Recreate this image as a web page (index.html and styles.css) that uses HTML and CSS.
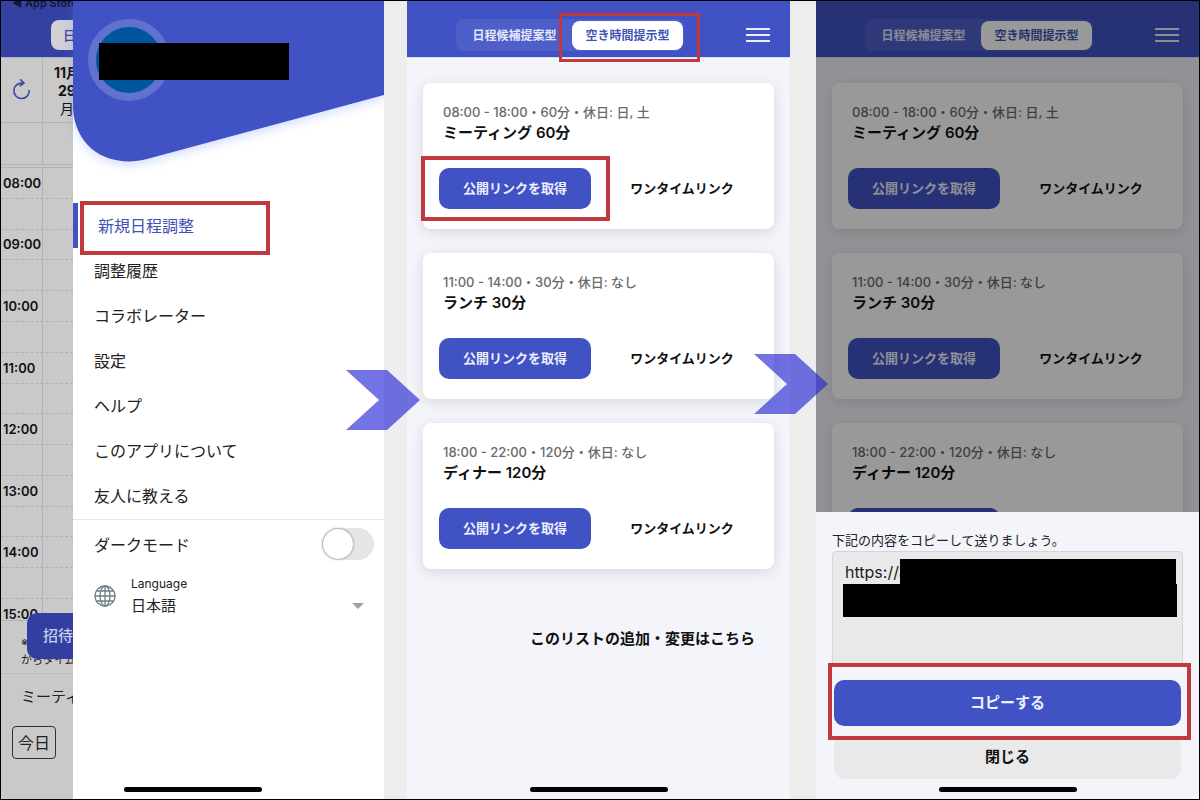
FILE: index.html
```
<!DOCTYPE html>
<html lang="ja">
<head>
<meta charset="UTF-8">
<meta name="viewport" content="width=device-width, initial-scale=1.0">
<title>公開リンクの取得手順</title>
<link rel="stylesheet" href="styles.css">
</head>
<body>
<div class="steps">

    <!-- 1. メニュー -->
    <section class="phone phone-menu">
        <div class="calendar">
            <div class="status">◀ App Store</div>
            <header class="cal-bar"><button type="button" class="cal-tab">日程候補提案型</button></header>
            <div class="cal-head">
                <button type="button" class="reload" aria-label="更新">
                    <svg viewBox="0 0 20 22" width="20" height="22" fill="none" stroke="#3c479f" stroke-width="1.6">
                        <path d="M17.2 12A7.7 7.7 0 1 1 10.5 5.2M8.2 1.2l3.8 4-4.4 3"/>
                    </svg>
                </button>
                <div class="cal-day"><b>11月</b><b>29</b><span>月</span></div>
            </div>
            <div class="cal-allday"><span></span></div>
            <div class="cal-hours">
                <div>08:00</div><div></div>
                <div>09:00</div><div></div>
                <div>10:00</div><div></div>
                <div>11:00</div><div></div>
                <div>12:00</div><div></div>
                <div>13:00</div><div></div>
                <div>14:00</div><div></div>
            </div>
            <div class="cal-last">15:00</div>
            <div class="cal-note">
                <p>※長押し</p>
                <p>からタイムゾーン</p>
                <button type="button" class="invite">招待する</button>
            </div>
            <p class="cal-title">ミーティング</p>
            <button type="button" class="today">今日</button>
        </div>

        <div class="drawer">
            <div class="profile">
                <svg class="profile-bg" viewBox="0 0 311 170" preserveAspectRatio="none">
                    <path d="M0 0H311V94L74 158C40 167 3 151 0 108Z" fill="#4152c5"/>
                </svg>
                <span class="avatar"></span>
                <span class="redact redact-name"></span>
            </div>
            <nav class="menu">
                <a href="#" class="active">新規日程調整<span class="marker"></span></a>
                <a href="#">調整履歴</a>
                <a href="#">コラボレーター</a>
                <a href="#">設定</a>
                <a href="#">ヘルプ</a>
                <a href="#">このアプリについて</a>
                <a href="#">友人に教える</a>
            </nav>
            <div class="dark-row">
                <label for="dark">ダークモード</label>
                <input type="checkbox" id="dark" class="switch">
            </div>
            <div class="lang-row">
                <svg viewBox="0 0 22 22" width="22" height="22" fill="none" stroke="#6e7f89" stroke-width="1.3">
                    <circle cx="11" cy="11" r="10"/>
                    <ellipse cx="11" cy="11" rx="5" ry="10"/>
                    <path d="M11 1v20M1 11h20M2.500 6h17M2.500 16h17"/>
                </svg>
                <div class="lang-field">
                    <label for="lang">Language</label>
                    <select id="lang"><option>日本語</option></select>
                </div>
                <span class="caret"></span>
            </div>
        </div>
        <span class="home-bar"></span>
    </section>

    <div class="connector">
        <svg class="arrow" viewBox="0 0 74 60" width="74" height="60"><path d="M0 0H41L74 30 41 60H0L33 30Z"/></svg>
    </div>

    <!-- 2. 空き時間提示型 -->
    <section class="phone">
        <header class="bar">
            <div class="tabs">
                <button type="button">日程候補提案型</button>
                <button type="button" class="on">空き時間提示型</button>
                <span class="marker"></span>
            </div>
            <button type="button" class="burger" aria-label="メニュー"><i></i><i></i><i></i></button>
        </header>
        <main class="cards">
            <article class="card">
                <p class="meta">08:00 - 18:00・60分・休日: 日, 土</p>
                <h2>ミーティング 60分</h2>
                <div class="actions">
                    <div class="marked"><button type="button" class="primary">公開リンクを取得</button><span class="marker"></span></div>
                    <button type="button" class="plain">ワンタイムリンク</button>
                </div>
            </article>
            <article class="card">
                <p class="meta">11:00 - 14:00・30分・休日: なし</p>
                <h2>ランチ 30分</h2>
                <div class="actions">
                    <button type="button" class="primary">公開リンクを取得</button>
                    <button type="button" class="plain">ワンタイムリンク</button>
                </div>
            </article>
            <article class="card">
                <p class="meta">18:00 - 22:00・120分・休日: なし</p>
                <h2>ディナー 120分</h2>
                <div class="actions">
                    <button type="button" class="primary">公開リンクを取得</button>
                    <button type="button" class="plain">ワンタイムリンク</button>
                </div>
            </article>
        </main>
        <a href="#" class="edit-list">このリストの追加・変更はこちら</a>
        <span class="home-bar"></span>
    </section>

    <div class="connector connector-high">
        <svg class="arrow" viewBox="0 0 74 60" width="74" height="60"><path d="M0 0H41L74 30 41 60H0L33 30Z"/></svg>
    </div>

    <!-- 3. コピー -->
    <section class="phone">
        <header class="bar">
            <div class="tabs">
                <button type="button">日程候補提案型</button>
                <button type="button" class="on">空き時間提示型</button>
            </div>
            <button type="button" class="burger" aria-label="メニュー"><i></i><i></i><i></i></button>
        </header>
        <main class="cards">
            <article class="card">
                <p class="meta">08:00 - 18:00・60分・休日: 日, 土</p>
                <h2>ミーティング 60分</h2>
                <div class="actions">
                    <button type="button" class="primary">公開リンクを取得</button>
                    <button type="button" class="plain">ワンタイムリンク</button>
                </div>
            </article>
            <article class="card">
                <p class="meta">11:00 - 14:00・30分・休日: なし</p>
                <h2>ランチ 30分</h2>
                <div class="actions">
                    <button type="button" class="primary">公開リンクを取得</button>
                    <button type="button" class="plain">ワンタイムリンク</button>
                </div>
            </article>
            <article class="card">
                <p class="meta">18:00 - 22:00・120分・休日: なし</p>
                <h2>ディナー 120分</h2>
                <div class="actions">
                    <button type="button" class="primary">公開リンクを取得</button>
                    <button type="button" class="plain">ワンタイムリンク</button>
                </div>
            </article>
        </main>
        <div class="shade"></div>
        <div class="sheet">
            <label for="url">下記の内容をコピーして送りましょう。</label>
            <div class="url-box">
                <textarea id="url" readonly>https://a</textarea>
                <span class="redact redact-top"></span>
                <span class="redact redact-bottom"></span>
            </div>
            <div class="marked copy-wrap"><button type="button" class="copy">コピーする</button><span class="marker"></span></div>
            <button type="button" class="close">閉じる</button>
        </div>
        <span class="home-bar"></span>
    </section>

</div>
</body>
</html>
```
FILE: styles.css
```
* {
    box-sizing: border-box;
}
body {
    margin: 0;
    font-family: Inter, 'Noto Sans CJK JP', sans-serif;
    font-size: 16px;
    color: #222;
    background: #ededed;
}
p, h2 {
    margin: 0;
}
button {
    padding: 0;
    border: none;
    background: none;
    font-family: inherit;
    color: inherit;
    white-space: nowrap;
    cursor: pointer;
}
a {
    color: inherit;
    text-decoration: none;
}
.steps {
    display: grid;
    grid-template-columns: 1fr 23px 1fr 26px 1fr;
    min-height: 100vh;
    border: 1px solid #000;
}
.phone {
    position: relative;
    display: flex;
    flex-direction: column;
    min-width: 0;
    overflow: hidden;
    background: #f4f5fa;
}
.home-bar {
    position: absolute;
    bottom: 7px;
    left: 50%;
    width: 138px;
    height: 5px;
    margin-left: -69px;
    border-radius: 3px;
    background: #000;
}
.connector {
    position: relative;
    z-index: 2;
}
.arrow {
    position: absolute;
    top: 369px;
    left: -38px;
    fill: rgba(36, 36, 211, 0.64);
}
.connector-high .arrow {
    top: 353px;
    left: -36px;
}
.marked {
    position: relative;
}
.marker {
    position: absolute;
    border: 4px solid #c0393f;
    pointer-events: none;
}
.redact {
    position: absolute;
    background: #000;
}

/* calendar behind the drawer */
.phone-menu {
    flex-direction: row;
    background: #fff;
}
.calendar {
    position: relative;
    flex: 0 0 72px;
    overflow: hidden;
    white-space: nowrap;
    background: #c9c9c9;
}
.status {
    position: absolute;
    top: -6px;
    left: 11px;
    font-size: 11px;
    line-height: 16px;
    font-weight: 600;
    color: #11163d;
}
.cal-bar {
    height: 57px;
    padding: 19px 0 0 50px;
    border-bottom: 1px solid #a9b0d8;
    background: #3541a0;
}
.cal-tab {
    height: 30px;
    padding: 0 12px;
    border-radius: 8px;
    background: #cfcfd4;
    color: #3541a0;
    font-size: 13px;
    line-height: 28px;
    font-weight: 500;
}
.cal-head {
    display: flex;
    height: 65px;
    border-bottom: 1px solid #b3b3b3;
}
.reload {
    flex: 0 0 42px;
    border-right: 1px solid #b3b3b3;
}
.cal-day {
    display: flex;
    flex: 0 0 48px;
    flex-direction: column;
    align-items: center;
    padding-top: 6px;
    font-size: 14px;
    line-height: 18px;
    color: #111;
}
.cal-allday {
    height: 45px;
    padding-bottom: 2px;
    border-bottom: 1px solid #b3b3b3;
}
.cal-allday span {
    display: block;
    height: 42px;
    border-bottom: 1px solid #b3b3b3;
    background: linear-gradient(#b3b3b3, #b3b3b3) 41px 0 / 1px 100% no-repeat;
}
.cal-hours, .cal-last {
    background: linear-gradient(#b3b3b3, #b3b3b3) 41px 0 / 1px 100% no-repeat;
    font-size: 13px;
    font-weight: 600;
    color: #111;
}
.cal-hours {
    display: grid;
    grid-auto-rows: 1fr;
    height: 431px;
}
.cal-hours div {
    display: flex;
    align-items: center;
    padding-left: 2px;
    border-bottom: 1px dashed #b0b0b0;
}
.cal-last {
    height: 22px;
    padding-left: 2px;
    line-height: 30px;
    border-bottom: 1px solid #b3b3b3;
}
.cal-note {
    position: relative;
    height: 53px;
    padding: 12px 0 0 20px;
    border-bottom: 1px solid #b9bcc0;
    font-size: 11px;
    line-height: 18px;
}
.invite {
    position: absolute;
    top: -8px;
    left: 26px;
    height: 46px;
    padding: 0 16px;
    border-radius: 10px;
    background: #323fa0;
    color: #c9cdf0;
    font-size: 15px;
    line-height: 44px;
    font-weight: 500;
}
.cal-title {
    padding: 12px 0 0 20px;
    font-size: 15px;
    line-height: 22px;
}
.today {
    width: 44px;
    height: 33px;
    margin: 18px 0 0 11px;
    border: 1px solid #333;
    border-radius: 4px;
    font-size: 16px;
    line-height: 28px;
}

/* drawer */
.drawer {
    flex: 1;
    min-width: 0;
    background: #fff;
}
.profile {
    position: relative;
    height: 202px;
}
.profile-bg {
    display: block;
    width: 100%;
    height: 170px;
    overflow: visible;
    filter: drop-shadow(0 4px 5px rgba(90, 130, 255, 0.25));
}
.avatar {
    position: absolute;
    top: 18px;
    left: 15px;
    width: 82px;
    height: 82px;
    border: 8px solid #6071cf;
    border-radius: 50%;
    background: #00569c;
}
.redact-name {
    top: 42px;
    left: 26px;
    width: 190px;
    height: 37px;
}
.menu {
    display: flex;
    flex-direction: column;
    padding-bottom: 1px;
    border-bottom: 1px solid #e6e6e6;
}
.menu a {
    position: relative;
    height: 45px;
    padding-left: 21px;
    line-height: 47px;
}
.menu a.active {
    padding-left: 20px;
    border-left: 5px solid #4152c5;
    color: #4152b5;
}
.menu .marker {
    top: -2px;
    left: 2px;
    width: 190px;
    height: 54px;
}
.dark-row {
    display: flex;
    align-items: center;
    justify-content: space-between;
    height: 48px;
    padding: 0 10px 0 21px;
}
.switch {
    appearance: none;
    width: 52px;
    height: 32px;
    margin: 0;
    border-radius: 16px;
    background: #e6e6e6;
}
.switch::before {
    content: '';
    display: block;
    width: 30px;
    height: 30px;
    margin: 1px;
    border-radius: 50%;
    background: #fff;
    box-shadow: 0 0 3px rgba(0, 0, 0, 0.5);
}
.lang-row {
    display: flex;
    align-items: center;
    padding: 7px 20px 0 21px;
}
.lang-field {
    display: flex;
    flex: 1;
    flex-direction: column;
    padding-left: 15px;
}
.lang-field label {
    font-size: 12px;
    line-height: 18px;
}
.lang-field select {
    appearance: none;
    height: 24px;
    padding: 0;
    border: none;
    background: none;
    font-family: inherit;
    font-size: 15px;
    color: inherit;
}
.caret {
    margin-top: 20px;
    border: 6px solid transparent;
    border-top-color: #a0a0a0;
    border-bottom: none;
}

/* schedule list */
.bar {
    display: flex;
    align-items: center;
    justify-content: space-between;
    height: 57px;
    padding: 12px 20px 0 49px;
    border-bottom: 1px solid #d5daf5;
    background: #4152c5;
}
.tabs {
    position: relative;
    display: flex;
    align-items: center;
    height: 32px;
    padding: 1px;
    border-radius: 8px;
    background: #4f5fca;
}
.tabs button {
    width: 115px;
    height: 29px;
    border-radius: 8px;
    font-size: 12px;
    line-height: 27px;
    font-weight: 600;
    color: #e4e7fa;
}
.tabs .on {
    width: 111px;
    background: #fff;
    color: #4152b5;
}
.tabs .marker {
    top: -6px;
    right: -16px;
    width: 141px;
    height: 49px;
    border-width: 3px;
}
.burger {
    display: flex;
    flex-direction: column;
    gap: 4px;
}
.burger i {
    width: 24px;
    height: 2px;
    background: #eceefb;
}
.cards {
    display: flex;
    flex-direction: column;
    gap: 24px;
    padding: 25px 16px 0;
}
.card {
    padding: 19px 16px 20px;
    border-radius: 8px;
    background: #fff;
    box-shadow: 0 3px 14px rgba(0, 0, 0, 0.12);
}
.meta {
    padding-left: 4px;
    font-size: 13px;
    line-height: 20px;
    font-weight: 500;
    color: #6a6a6a;
    white-space: nowrap;
}
.card h2 {
    padding-left: 4px;
    font-size: 15px;
    line-height: 22px;
    font-weight: 600;
    color: #111;
}
.actions {
    display: flex;
    margin-top: 24px;
}
.primary, .plain {
    width: 152px;
    height: 41px;
    font-size: 13px;
    line-height: 39px;
    font-weight: 600;
}
.primary {
    border-radius: 10px;
    background: #4152c5;
    color: #eef0fd;
}
.plain {
    margin-left: 15px;
    color: #111;
}
.actions .marker {
    top: -12px;
    left: -18px;
    width: 189px;
    height: 65px;
}
.edit-list {
    align-self: flex-end;
    margin: 59px 35px 0 0;
    font-size: 15px;
    line-height: 22px;
    font-weight: 600;
    color: #111;
}

/* copy sheet */
.shade {
    position: absolute;
    inset: 0;
    background: rgba(0, 0, 0, 0.4);
}
.sheet {
    position: absolute;
    right: 0;
    bottom: 0;
    left: 0;
    display: flex;
    flex-direction: column;
    padding: 17px 16px 20px;
    background: #f4f5fa;
}
.sheet label {
    font-size: 13px;
    line-height: 22px;
}
.url-box {
    position: relative;
}
.url-box textarea {
    display: block;
    width: 100%;
    height: 116px;
    padding: 8px 12px;
    border: 1px solid #d4d5d8;
    border-radius: 4px;
    outline: none;
    resize: none;
    background: #e9e9e9;
    font-family: inherit;
    font-size: 16px;
    line-height: 24px;
    color: #222;
}
.redact-top {
    top: 8px;
    right: 7px;
    left: 68px;
    height: 26px;
}
.redact-bottom {
    top: 33px;
    right: 6px;
    left: 11px;
    height: 33px;
}
.copy-wrap {
    z-index: 1;
    margin: -4px -8px 0 -4px;
    padding: 17px 10px 14px 6px;
    background: #f4f5fa;
}
.copy-wrap .marker {
    inset: 0;
}
.copy, .close {
    font-size: 15px;
    line-height: 44px;
    font-weight: 600;
}
.copy {
    display: block;
    width: 100%;
    height: 46px;
    border-radius: 10px;
    background: #4152c5;
    color: #eef0fd;
}
.close {
    height: 44px;
    margin: -5px 2px 0;
    border-radius: 10px;
    background: #e9e9e9;
    color: #111;
}
```
